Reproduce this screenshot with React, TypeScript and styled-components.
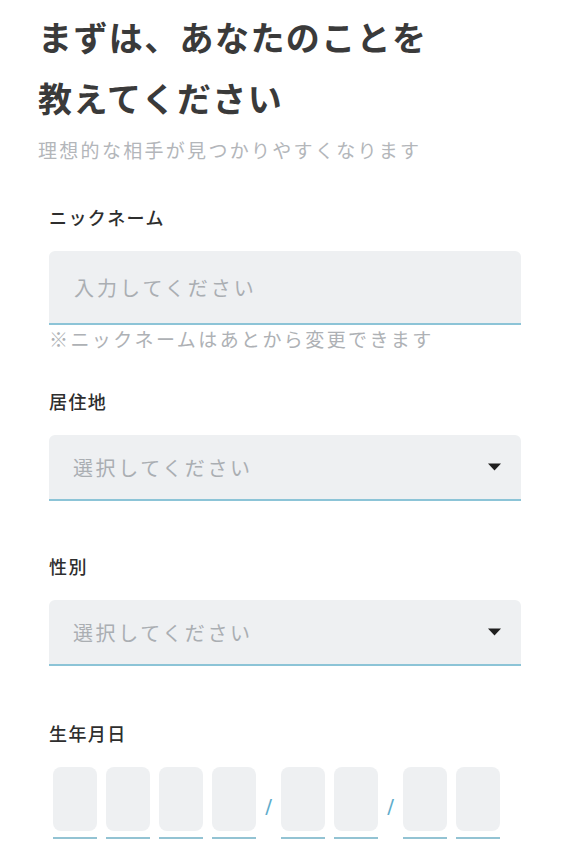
import React from 'react';
import styled, { createGlobalStyle } from 'styled-components';

const GlobalStyle = createGlobalStyle`
	html, body {
		margin: 0;
		padding: 0;
		background: #ffffff;
	}
	body {
		font-family: 'Noto Sans CJK JP', 'Noto Sans', sans-serif;
		color: #333333;
	}
	* {
		box-sizing: border-box;
	}
`;

const Page = styled.div`
	width: 570px;
	padding: 6px 49px 40px 38px;
`;

const Title = styled.h1`
	margin: 0;
	font-size: 34px;
	line-height: 61px;
	font-weight: 700;
	letter-spacing: 1.4px;
	color: #3a3a3a;
`;

const Lead = styled.p`
	margin: 8px 0 0;
	font-size: 19px;
	line-height: 28px;
	letter-spacing: 2.3px;
	color: #b3b6ba;
`;

const Form = styled.form`
	display: flex;
	flex-direction: column;
	margin: 40px 0 0 11px;
`;

const Section = styled.div<{ $after: number }>`
	display: flex;
	flex-direction: column;
	margin-bottom: ${(p) => p.$after}px;
`;

const Label = styled.label`
	font-size: 18px;
	line-height: 26px;
	font-weight: 500;
	letter-spacing: 1.4px;
	color: #2e2e2e;
	margin-bottom: 21px;
`;

const TextInput = styled.input`
	height: 74px;
	width: 100%;
	border: none;
	border-bottom: 2px solid #8cc4d7;
	border-radius: 6px 6px 0 0;
	background: #eef0f2;
	padding: 0 0 0 25px;
	font-family: inherit;
	font-size: 20px;
	letter-spacing: 3px;
	color: #333333;
	outline: none;

	&::placeholder {
		color: #aaaeb2;
	}
`;

const Helper = styled.div`
	font-size: 19px;
	line-height: 28px;
	letter-spacing: 2.4px;
	color: #aeb1b5;
`;

const SelectBox = styled.div`
	height: 66px;
	display: flex;
	align-items: center;
	justify-content: space-between;
	background: #eef0f2;
	border-bottom: 2px solid #8cc4d7;
	border-radius: 6px 6px 0 0;
	padding: 0 20px 0 24px;
	cursor: pointer;
`;

const SelectText = styled.span`
	font-size: 20px;
	letter-spacing: 2.6px;
	color: #aaaeb2;
`;

const DateRow = styled.div`
	display: flex;
	gap: 9px;
	padding-left: 4px;
`;

const DateCell = styled.div`
	display: flex;
	flex-direction: column;
	gap: 6px;
`;

const DateBox = styled.input`
	width: 44px;
	height: 64px;
	border: none;
	border-radius: 8px;
	background: #eef0f2;
	text-align: center;
	font-family: inherit;
	font-size: 24px;
	color: #333333;
	outline: none;
`;

const DateLine = styled.div`
	height: 2px;
	background: #93c3d3;
`;

const Slash = styled.span`
	width: 7px;
	align-self: center;
	margin-top: 6px;
	font-family: 'DejaVu Sans', sans-serif;
	font-size: 20px;
	line-height: 24px;
	color: #5eaccb;
	text-align: center;
`;

const Caret = () => (
	<svg width="13" height="8" viewBox="0 0 13 8">
		<path d="M0 0.5 H13 L6.5 7.5 Z" fill="#1f1f1f" />
	</svg>
);

const Select: React.FC<{ placeholder: string }> = ({ placeholder }) => (
	<SelectBox>
		<SelectText>{placeholder}</SelectText>
		<Caret />
	</SelectBox>
);

const dateGroups = [4, 2, 2];

export default function App() {
	return (
		<>
			<GlobalStyle />
			<Page>
				<Title>
					まずは、あなたのことを
					<br />
					教えてください
				</Title>
				<Lead>理想的な相手が見つかりやすくなります</Lead>
				<Form onSubmit={(e) => e.preventDefault()}>
					<Section $after={35}>
						<Label>ニックネーム</Label>
						<TextInput placeholder="入力してください" />
						<Helper>※ニックネームはあとから変更できます</Helper>
					</Section>
					<Section $after={52}>
						<Label>居住地</Label>
						<Select placeholder="選択してください" />
					</Section>
					<Section $after={54}>
						<Label>性別</Label>
						<Select placeholder="選択してください" />
					</Section>
					<Section $after={0}>
						<Label>生年月日</Label>
						<DateRow>
							{dateGroups.map((count, g) => (
								<React.Fragment key={g}>
									{g > 0 && <Slash>/</Slash>}
									{Array.from({ length: count }).map((_, i) => (
										<DateCell key={i}>
											<DateBox maxLength={1} inputMode="numeric" />
											<DateLine />
										</DateCell>
									))}
								</React.Fragment>
							))}
						</DateRow>
					</Section>
				</Form>
			</Page>
		</>
	);
}
